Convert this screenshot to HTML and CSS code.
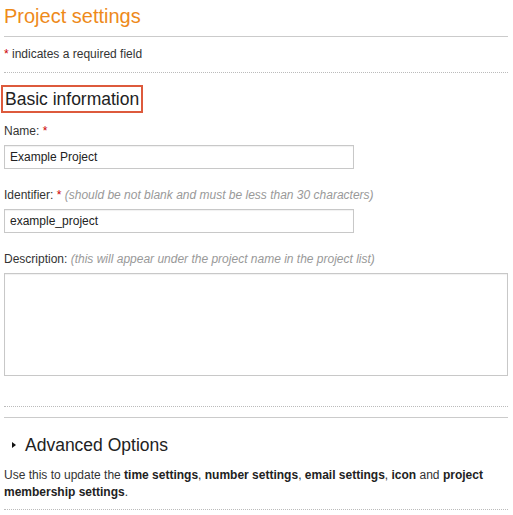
FILE: index.html
```html
<!DOCTYPE html>
<html>
<head>
<meta charset="utf-8">
<link rel="stylesheet" href="styles.css">
</head>
<body>
<div class="page">
  <h2 class="title">Project settings</h2>
  <p class="note"><span class="req">*</span> indicates a required field</p>
  <section class="basic">
    <h3 class="section-head"><span class="boxed">Basic information</span></h3>
    <div class="field">
      <div class="label">Name: <span class="req">*</span></div>
      <div class="input short">Example Project</div>
    </div>
    <div class="field">
      <div class="label">Identifier: <span class="req">*</span> <em class="hint">(should be not blank and must be less than 30 characters)</em></div>
      <div class="input short">example_project</div>
    </div>
    <div class="field">
      <div class="label">Description: <em class="hint">(this will appear under the project name in the project list)</em></div>
      <div class="textarea"></div>
    </div>
  </section>
  <section class="advanced">
    <h3 class="adv-head"><span class="tri"></span>Advanced Options</h3>
    <p class="adv-text">Use this to update the <b>time settings</b>, <b>number settings</b>, <b>email settings</b>, <b>icon</b> and <b>project membership settings</b>.</p>
  </section>
</div>
</body>
</html>
```
FILE: styles.css
```css
html, body { margin: 0; padding: 0; background: #fff; }
body {
  font-family: "Liberation Sans", Arial, Helvetica, sans-serif;
  color: #333;
  font-size: 12px;
}
.page { padding: 0 5px 0 4px; }
.title {
  margin: 0;
  padding: 4px 0 8px 0;
  font-size: 20px;
  line-height: 24px;
  font-weight: normal;
  color: #ee8a1a;
  border-bottom: 1px solid #cbcbcb;
}
.note {
  margin: 0;
  padding: 9px 0 10px 0;
  line-height: 16px;
  border-bottom: 1px dotted #bbb;
}
.req { color: #cc0000; }
.basic {
  padding: 12px 0 30px 0;
  border-bottom: 1px dotted #bbb;
}
.section-head {
  margin: 0 0 0 -3px;
  font-size: 17.5px;
  line-height: 22px;
  font-weight: normal;
}
.boxed {
  display: inline-block;
  border: 2px solid #dd5a3c;
  padding: 1px 2px 1px 2px;
  color: #222;
}
.field { margin-top: 10px; }
.field + .field { margin-top: 18px; }
.label { line-height: 16px; margin-bottom: 6px; }
.hint { color: #999; }
.input {
  box-sizing: border-box;
  height: 24px;
  border: 1px solid #c8c8c8;
  box-shadow: inset 0 1px 1px rgba(0,0,0,0.06);
  padding: 0 5px;
  line-height: 22px;
  color: #222;
}
.short { width: 350px; }
.textarea {
  box-sizing: border-box;
  height: 103px;
  border: 1px solid #c8c8c8;
  box-shadow: inset 0 1px 1px rgba(0,0,0,0.06);
}
.advanced {
  border-top: 1px solid #cbcbcb;
  margin-top: 10px;
  border-bottom: 1px dotted #bbb;
}
.adv-head {
  margin: 0;
  padding: 16px 0 0 8px;
  font-size: 17.5px;
  line-height: 22px;
  font-weight: normal;
  color: #222;
  display: flex;
  align-items: center;
}
.tri {
  width: 0; height: 0;
  border-top: 3.5px solid transparent;
  border-bottom: 3.5px solid transparent;
  border-left: 4px solid #111;
  margin-right: 9px;
}
.adv-text {
  margin: 0;
  padding: 11px 0 8px 0;
  line-height: 17px;
}
.adv-text b { color: #222; }
```
